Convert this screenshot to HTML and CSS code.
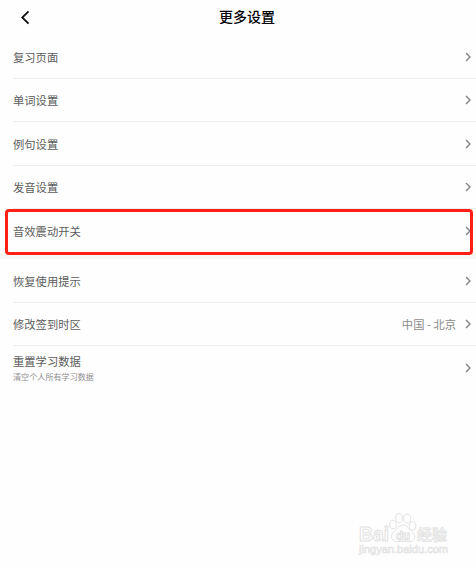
FILE: index.html
```html
<!DOCTYPE html>
<html lang="zh-CN">
<head>
<meta charset="utf-8">
<title>更多设置</title>
<link rel="stylesheet" href="styles.css">
</head>
<body>
<svg class="defs" width="0" height="0"><symbol id="chevron" viewBox="0 0 6 10"><path d="M1 1l4 4-4 4"/></symbol></svg>
<header class="header">
  <svg class="back" viewBox="0 0 10 15"><path d="M8.500 1.300L2.300 7.500l6.200 6.200"/></svg>
  <h1 class="title">更多设置</h1>
</header>
<main>
  <section class="group">
    <div class="row"><span>复习页面</span><svg class="chevron"><use href="#chevron"/></svg></div>
    <div class="row"><span>单词设置</span><svg class="chevron"><use href="#chevron"/></svg></div>
    <div class="row"><span>例句设置</span><svg class="chevron"><use href="#chevron"/></svg></div>
    <div class="row"><span>发音设置</span><svg class="chevron"><use href="#chevron"/></svg></div>
    <div class="row marked"><span>音效震动开关</span><svg class="chevron"><use href="#chevron"/></svg><i class="highlight"></i></div>
  </section>
  <div class="divider"></div>
  <section class="group">
    <div class="row"><span>恢复使用提示</span><svg class="chevron"><use href="#chevron"/></svg></div>
    <div class="row"><span>修改签到时区</span><span class="value">中国 - 北京</span><svg class="chevron"><use href="#chevron"/></svg></div>
    <div class="row"><div class="stack"><span>重置学习数据</span><small class="note">清空个人所有学习数据</small></div><svg class="chevron"><use href="#chevron"/></svg></div>
  </section>
</main>
<svg class="watermark" viewBox="0 0 100 50">
  <g class="outline">
    <text class="brand" x="2" y="32" textLength="30" lengthAdjust="spacingAndGlyphs">Bai</text>
    <ellipse cx="36" cy="15.500" rx="3.300" ry="4.300"/>
    <ellipse cx="42.200" cy="9" rx="3.500" ry="4.500"/>
    <ellipse cx="50.200" cy="9.500" rx="3.500" ry="4.500"/>
    <ellipse cx="55.500" cy="17" rx="3.300" ry="4.300"/>
    <path d="M46 16c4 0 6 4 9.500 7 4 4 2.500 10-3.500 9.700-3-.5-8-.5-11 0-6 .5-8.500-5.500-4.500-9.500 3-3 5.500-7.200 9.500-7.200z"/>
    <text class="du" x="39" y="30.500" textLength="14" lengthAdjust="spacingAndGlyphs">du</text>
    <text class="cn" x="60" y="31" textLength="30" lengthAdjust="spacingAndGlyphs">经验</text>
    <text class="url" x="2" y="44" textLength="89" lengthAdjust="spacingAndGlyphs">jingyan.baidu.com</text>
  </g>
</svg>
</body>
</html>
```
FILE: styles.css
```css
* { box-sizing: border-box; }
body {
  margin: 0;
  height: 567px;
  overflow: hidden;
  background: #fefefe;
  color: #5c5c5c;
  font: 11.3px/16px "Noto Sans CJK SC", sans-serif;
}
.defs { position: absolute; }
svg { fill: none; }
.header {
  display: grid;
  grid-template-columns: 40px 1fr 22px;
  align-items: center;
  height: 35px;
}
.back { width: 10px; height: 15px; margin-left: 20px; margin-top: -1px; stroke: #111; stroke-width: 1.8; }
.title { margin: -3px 0 0; text-align: center; color: #000; font-size: 14px; line-height: 20px; font-weight: 500; }
.group { padding-left: 13px; }
.row {
  display: flex;
  align-items: center;
  height: 43.5px;
  padding: .8px 5px 0 0;
  border-bottom: 1px solid #ededed;
}
.row:last-child { border-bottom-color: transparent; }
.chevron { width: 6px; height: 10px; margin-left: auto; stroke: #888; stroke-width: 1.5; }
.value { margin-left: auto; color: #8c8c8c; }
.value + .chevron { margin-left: 9px; }
.marked { position: relative; }
.highlight {
  position: absolute;
  left: -8px;
  top: 0;
  width: 468px;
  height: 46px;
  border: 3px solid #ff2015;
  border-radius: 4px;
}
.divider { height: 6.5px; background: #f7f7f7; }
.stack { display: flex; flex-direction: column; padding-top: 3px; }
.note { color: #909090; font-size: 8.1px; line-height: 16px; }
.watermark { position: absolute; left: 357px; top: 509px; width: 100px; height: 50px; }
.outline { stroke: #e2e2e2; stroke-width: 1; fill: #fefefe; font-family: "Liberation Sans", "Noto Sans CJK SC", sans-serif; font-weight: 700; }
.brand { font-size: 20px; }
.du { font-size: 12px; }
.cn { font-size: 15px; font-weight: 500; stroke-width: .8; }
.url { font-size: 11px; font-weight: 400; stroke-width: .6; fill: #f3f3f3; }
```
